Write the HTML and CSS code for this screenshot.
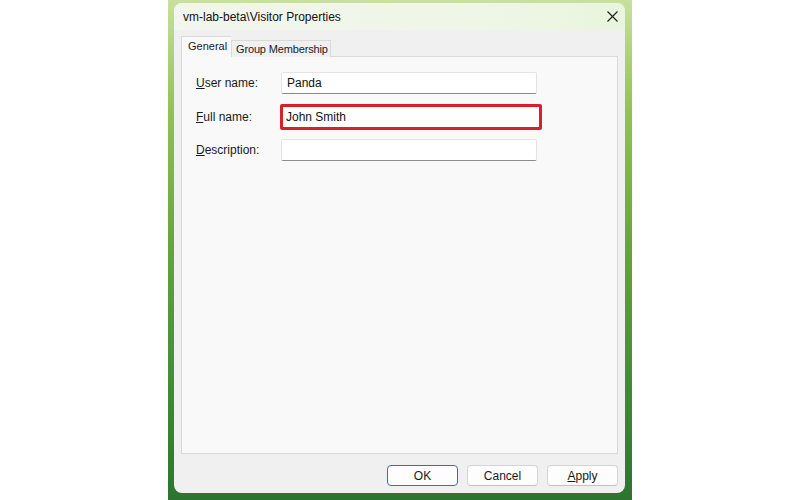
FILE: index.html
```html
<!DOCTYPE html>
<html lang="en">
<head>
<meta charset="UTF-8">
<title>Visitor Properties</title>
<link rel="stylesheet" href="styles.css">
</head>
<body>

<div class="desk">
    <div class="window">
        <div class="titlebar">
            <span class="title">vm-lab-beta\Visitor Properties</span>
            <span class="close">
                <svg width="11" height="11" viewBox="0 0 11 11"><path d="M0.5 0.5 L10.5 10.5 M10.5 0.5 L0.5 10.5" stroke="#1b1b1b" stroke-width="1.1" fill="none"/></svg>
            </span>
        </div>

        <div class="body">
            <div class="tabs">
                <div class="tab selected">General</div>
                <div class="tab">Group Membership</div>
            </div>

            <div class="panel">
                <div class="row first">
                    <label><u>U</u>ser name:</label>
                    <div class="field">Panda</div>
                </div>
                <div class="row tall">
                    <label><u>F</u>ull name:</label>
                    <div class="field highlight">John Smith</div>
                </div>
                <div class="row">
                    <label><u>D</u>escription:</label>
                    <div class="field"></div>
                </div>
            </div>

            <div class="buttons">
                <button class="btn default">OK</button>
                <button class="btn">Cancel</button>
                <button class="btn"><u>A</u>pply</button>
            </div>
        </div>
    </div>
</div>

</body>
</html>
```

FILE: styles.css
```css
body {
    margin: 0;
    background: #ffffff;
    font-family: "Liberation Sans", Arial, sans-serif;
    font-size: 12px;
    color: #1a1a1a;
}

.desk {
    width: 464px;
    height: 500px;
    margin: 0 auto;
    padding: 3px 7px 7px 6px;
    box-sizing: border-box;
    background: linear-gradient(to bottom, #c9e09e 0%, #93c254 22%, #66a33b 50%, #418a35 78%, #2d7431 100%);
}

.window {
    height: 490px;
    border-radius: 8px;
    overflow: hidden;
    background: #f0f0f0;
    display: flex;
    flex-direction: column;
}

.titlebar {
    height: 27px;
    flex: none;
    display: flex;
    align-items: center;
    justify-content: space-between;
    padding: 0 7px 0 9px;
    background: linear-gradient(to right, #f2f6ee, #eef6e6 70%, #e9f5dc);
}

.title {
    font-size: 12px;
    color: #111;
}

.close {
    display: flex;
    width: 11px;
    height: 11px;
}

.body {
    flex: 1;
    display: flex;
    flex-direction: column;
    padding: 6px 7px 0 7px;
}

.tabs {
    display: flex;
    align-items: flex-end;
    height: 21px;
    margin-bottom: -1px;
    position: relative;
    z-index: 1;
}

.tab {
    height: 17px;
    line-height: 16px;
    padding: 0 2px 0 4px;
    border: 1px solid #d9d9d9;
    border-bottom: none;
    background: #f0f0f0;
    color: #1a1a1a;
    font-size: 11px;
    letter-spacing: -0.15px;
    box-sizing: border-box;
}

.tab.selected {
    height: 21px;
    line-height: 19px;
    width: 50px;
    padding: 0 0 0 6px;
    background: #f9f9f9;
    border-right: none;
    letter-spacing: 0;
}

.panel {
    height: 398px;
    box-sizing: border-box;
    border: 1px solid #d9d9d9;
    background: #f9f9f9;
    padding: 15px 0 0 14px;
    display: flex;
    flex-direction: column;
    gap: 9px;
}

.row {
    display: flex;
    align-items: center;
    height: 22px;
}

.row.first {
    margin-bottom: 1px;
}

.row.tall {
    height: 26px;
}

.row label {
    width: 85px;
    color: #1a1a1a;
}

.field {
    width: 256px;
    height: 22px;
    box-sizing: border-box;
    background: #ffffff;
    border: 1px solid #e3e3e3;
    border-bottom-color: #8c8c8c;
    border-radius: 2px;
    padding: 0 5px;
    line-height: 20px;
    color: #111;
}

.field.highlight {
    width: 262px;
    height: 26px;
    margin-left: -1px;
    border: 3px solid #d8202c;
    border-radius: 2px;
    padding: 0 3px;
    line-height: 20px;
}

.buttons {
    flex: 1;
    display: flex;
    justify-content: flex-end;
    align-items: flex-start;
    gap: 9px;
    padding-top: 11px;
}

.btn {
    width: 71px;
    height: 21px;
    padding: 0;
    font-family: "Liberation Sans", Arial, sans-serif;
    font-size: 12px;
    color: #1a1a1a;
    background: #fdfdfd;
    border: 1px solid #d4d4d4;
    border-bottom-color: #c2c2c2;
    border-radius: 4px;
}

.btn.default {
    border: 1.5px solid #3f7488;
}
```
